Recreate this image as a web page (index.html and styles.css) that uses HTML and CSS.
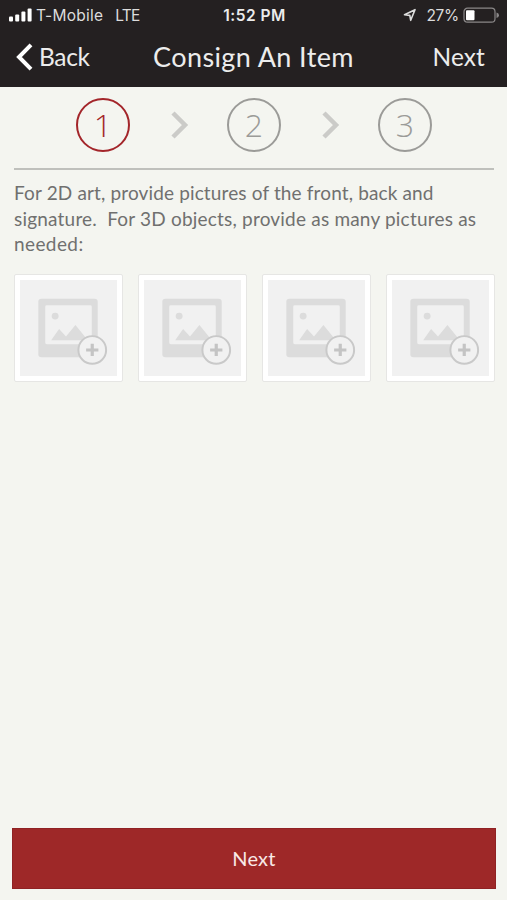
FILE: index.html
```html
<!DOCTYPE html>
<html lang="en">
<head>
    <meta charset="UTF-8">
    <meta name="viewport" content="width=device-width, initial-scale=1.0">
    <title>Consign An Item</title>
    <link rel="stylesheet" href="styles.css">
</head>
<body>
    <svg width="0" height="0" class="defs">
        <symbol id="add-photo" viewBox="0 0 97 97">
            <path fill="#dcdcdc" fill-rule="evenodd" d="M21 19H75Q78 19 78 22V75Q78 78 75 78H21Q18 78 18 75V22Q18 19 21 19ZM26.500 25.500Q25 25.500 25 27V63.500Q25 65 26.500 65H70.500Q72 65 72 63.500V27Q72 25.500 70.500 25.500Z"/>
            <circle cx="35" cy="36.500" r="3.500" fill="#dcdcdc"/>
            <path d="M31 61L39 49.500L46 57L55.500 45.500L68 61Z" fill="#dcdcdc"/>
            <circle cx="72.500" cy="70.700" r="14" fill="#f1f1f1" stroke="#c9c9c9" stroke-width="2"/>
            <path d="M72.500 64.500V76.900M66.300 70.700H78.700" stroke="#c4c4c4" stroke-width="3.200"/>
        </symbol>
    </svg>

    <header>
        <div class="status-bar">
            <div class="status-left">
                <svg class="signal" width="24" height="14" viewBox="0 0 24 14" fill="#fff">
                    <rect x="0" y="8.500" width="4" height="5" rx="1"/>
                    <rect x="6.200" y="6.500" width="4" height="7" rx="1"/>
                    <rect x="12.400" y="3.500" width="4" height="10" rx="1"/>
                    <rect x="18.600" y="0.500" width="4" height="13" rx="1"/>
                </svg>
                <span class="carrier">T-Mobile</span>
                <span class="network">LTE</span>
            </div>
            <div class="time">1:52 PM</div>
            <div class="status-right">
                <svg width="14" height="14" viewBox="0 0 14 14">
                    <path d="M1.500 6.800L12 1.700L7.700 12.300L6.800 7.400Z" fill="none" stroke="#ddd" stroke-width="1.600" stroke-linejoin="round"/>
                </svg>
                <span class="percent">27%</span>
                <svg width="37" height="17" viewBox="0 0 37 17">
                    <rect x="1" y="1.200" width="31" height="14" rx="3.500" fill="none" stroke="#8a8788" stroke-width="1.200"/>
                    <rect x="3" y="3.200" width="8.500" height="10" rx="1" fill="#fff"/>
                    <path d="M33.500 5.500Q36 6 36 8.200T33.500 11Z" fill="#8a8788"/>
                </svg>
            </div>
        </div>
        <nav class="nav-bar">
            <div class="nav-back">
                <svg width="18" height="28" viewBox="0 0 18 28">
                    <path d="M15 1.800L3 14L15 26.200" fill="none" stroke="#fff" stroke-width="4"/>
                </svg>
                <span>Back</span>
            </div>
            <h1>Consign An Item</h1>
            <div class="nav-next">Next</div>
        </nav>
    </header>

    <main>
        <div class="steps">
            <div class="step active">1</div>
            <svg class="arrow" width="18" height="28" viewBox="0 0 18 28">
                <path d="M2 2L14 14L2 26" fill="none" stroke="#cbcbc8" stroke-width="4.500"/>
            </svg>
            <div class="step">2</div>
            <svg class="arrow" width="18" height="28" viewBox="0 0 18 28">
                <path d="M2 2L14 14L2 26" fill="none" stroke="#cbcbc8" stroke-width="4.500"/>
            </svg>
            <div class="step">3</div>
        </div>

        <p class="instructions">
            <span class="first-line">For 2D art, provide pictures of the front, back and</span><br>
            signature.&nbsp; For 3D objects, provide as many pictures as<br>
            <span class="last-line">needed:</span>
        </p>

        <div class="photos">
            <div class="photo"><svg><use href="#add-photo"/></svg></div>
            <div class="photo"><svg><use href="#add-photo"/></svg></div>
            <div class="photo"><svg><use href="#add-photo"/></svg></div>
            <div class="photo"><svg><use href="#add-photo"/></svg></div>
        </div>
    </main>

    <button class="next-button">Next</button>
</body>
</html>
```

FILE: styles.css
```css
* {
    box-sizing: border-box;
}

body {
    font-family: Lato, sans-serif;
    margin: 0;
    height: 900px;
    display: flex;
    flex-direction: column;
    background: #f4f5f0;
    color: #70706f;
    overflow: hidden;
}

svg {
    display: block;
    flex: none;
}

.defs {
    position: absolute;
}

header {
    height: 87px;
    background: #242021;
    color: #ececec;
}

/* Status bar */
.status-bar {
    height: 30px;
    display: grid;
    grid-template-columns: 1fr auto 1fr;
    align-items: center;
    padding: 0 7px 0 9px;
    font-family: Inter, sans-serif;
    font-size: 15.5px;
    white-space: nowrap;
}

.status-left,
.status-right {
    display: flex;
    align-items: center;
    color: #dcdcdc;
}

.status-right {
    justify-content: flex-end;
}

.carrier {
    margin-left: 3px;
    letter-spacing: 0.25px;
}

.network {
    margin-left: 12px;
    letter-spacing: -0.8px;
}

.time {
    font-weight: 600;
    letter-spacing: 0.5px;
}

.percent {
    margin: 0 4px 0 9px;
    letter-spacing: -0.3px;
}

/* Navigation */
.nav-bar {
    height: 54px;
    display: grid;
    grid-template-columns: 1fr auto 1fr;
    align-items: center;
    padding: 0 22px 1px;
    font-size: 25px;
}

.nav-back {
    display: flex;
    align-items: center;
    gap: 5px;
    margin-left: -6px;
    font-size: 24.5px;
    letter-spacing: -0.3px;
}

h1 {
    margin: 0;
    font-size: 27px;
    font-weight: 400;
    letter-spacing: 0.4px;
}

.nav-next {
    text-align: right;
    font-size: 24.5px;
    letter-spacing: 0.1px;
}

main {
    flex: 1;
    padding: 0 13px 0 14px;
}

.steps {
    height: 83px;
    display: flex;
    justify-content: center;
    padding: 11px 0 0;
    border-bottom: 2px solid #bfc0bc;
}

.step {
    width: 54px;
    height: 54px;
    border: 2px solid #9b9b98;
    border-radius: 50%;
    color: #9b9b98;
    font-family: "Open Sans", sans-serif;
    font-size: 32px;
    font-weight: 300;
    line-height: 49px;
    text-align: center;
}

.step.active {
    border-color: #a3252a;
    color: #a3252a;
}

.arrow {
    margin: 13px 38px 0 41px;
}

.instructions {
    margin: 10px 0 0;
    font-size: 19px;
    line-height: 25.7px;
    letter-spacing: 0.2px;
    white-space: nowrap;
}

.first-line {
    letter-spacing: 0.14px;
}

.last-line {
    letter-spacing: 0.4px;
}

.photos {
    display: flex;
    gap: 15px;
    margin-top: 17px;
}

.photo {
    width: 109px;
    height: 108px;
    border: 1px solid #e6e6e4;
    border-radius: 2px;
    background: #fff;
    padding: 5px;
}

.photo svg {
    width: 97px;
    height: 96px;
    background: #f1f1f1;
}

.next-button {
    height: 61px;
    margin: 0 11px 11px 12px;
    border: 1px solid #8f2224;
    background: #9e2828;
    color: #f8e9e7;
    font-family: Lato, sans-serif;
    font-size: 20px;
    letter-spacing: 0.2px;
    padding-bottom: 3px;
}
```
